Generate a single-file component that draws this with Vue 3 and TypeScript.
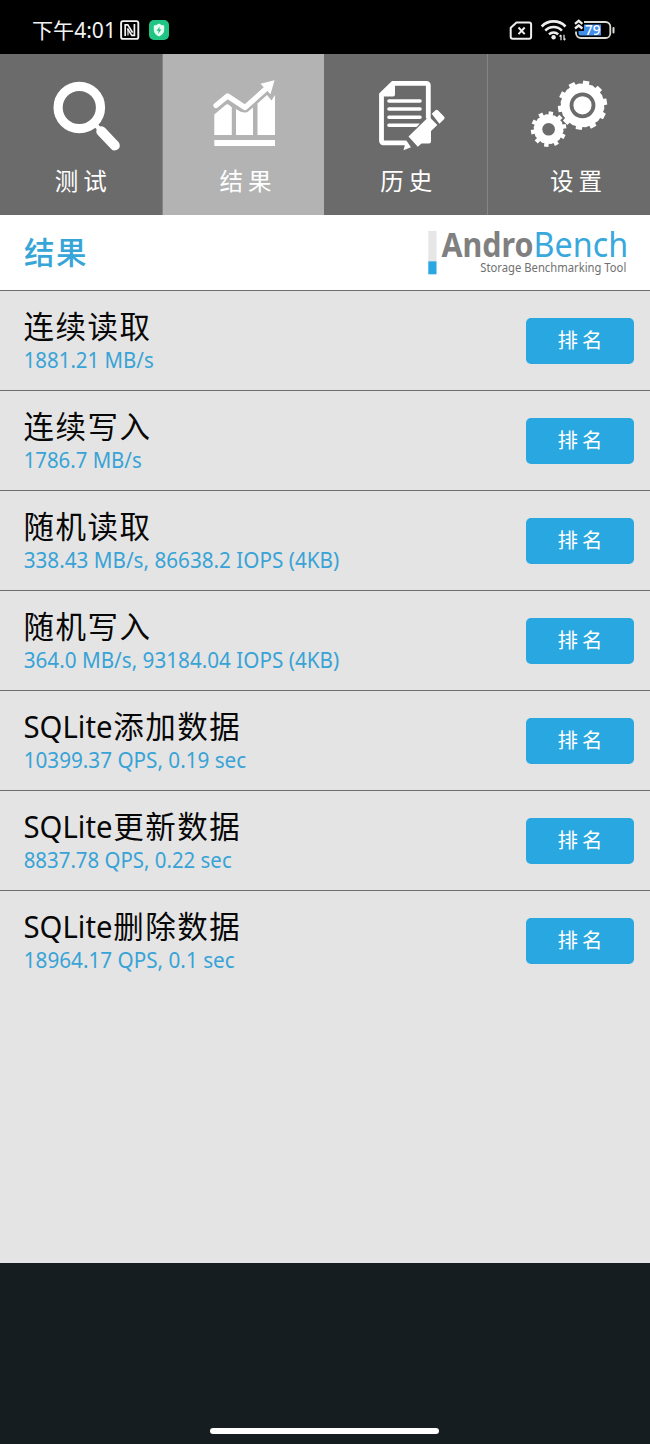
<script setup lang="ts">
interface Result {
  latin: string
  cjk: string
  value: string
  width: number
}

const results: Result[] = [
  { latin: '', cjk: '连续读取', value: '1881.21 MB/s', width: 130 },
  { latin: '', cjk: '连续写入', value: '1786.7 MB/s', width: 118 },
  { latin: '', cjk: '随机读取', value: '338.43 MB/s, 86638.2 IOPS (4KB)', width: 315.5 },
  { latin: '', cjk: '随机写入', value: '364.0 MB/s, 93184.04 IOPS (4KB)', width: 315.5 },
  { latin: 'SQLite', cjk: '添加数据', value: '10399.37 QPS, 0.19 sec', width: 222.5 },
  { latin: 'SQLite', cjk: '更新数据', value: '8837.78 QPS, 0.22 sec', width: 208 },
  { latin: 'SQLite', cjk: '删除数据', value: '18964.17 QPS, 0.1 sec', width: 211 },
]

// Builds a closed gear outline; phase is the clockwise angle of the first tooth from vertical.
function gear(cx: number, cy: number, outer: number, root: number, teeth: number, phase: number): string {
  const step = 360 / teeth
  const points: string[] = []
  for (let i = 0; i < teeth; i++) {
    const mid = phase + i * step
    const corners: [number, number][] = [
      [root, -step * 0.24],
      [outer, -step * 0.2],
      [outer, step * 0.2],
      [root, step * 0.24],
      [root + 0.5, step * 0.5],
    ]
    for (const [r, offset] of corners) {
      const a = ((mid + offset) * Math.PI) / 180
      points.push(`${(cx + r * Math.sin(a)).toFixed(2)} ${(cy - r * Math.cos(a)).toFixed(2)}`)
    }
  }
  return `M${points.join('L')}Z`
}

const bigGear = gear(582.5, 105.3, 24.8, 21.6, 10, 9)
const smallGear = gear(548.6, 129.2, 17.9, 14.6, 10, 8)
</script>

<template>
  <div class="screen">
    <header class="status">
      <svg width="200" height="54" viewBox="0 0 200 54">
        <text class="clock" x="32" y="37.8" textLength="84" lengthAdjust="spacingAndGlyphs">下午4:01</text>
        <rect x="121.1" y="21.1" width="17.2" height="17.8" rx="2" fill="none" stroke="#f2f2f2" stroke-width="1.9" />
        <path d="M125.200 36V24.800h2.600l4.800 7.800M134.400 24v11.400h-2.600l-4.400-7" fill="none" stroke="#f2f2f2" stroke-width="1.700" />
        <path d="M128 29v6.500" stroke="#f2f2f2" stroke-width="1.200" />
        <rect x="149" y="20" width="20" height="20" rx="5" fill="#20c584" />
        <path d="M159 23.600c1.700 1.300 3.400 1.800 5.200 1.900v4.600c0 3.100-2 5-5.200 6.500c-3.200-1.500-5.200-3.400-5.200-6.500v-4.600c1.800-.1 3.500-.6 5.200-1.900z" fill="#e6fff4" />
        <path d="M159.800 26.500l-3.200 4.200h2.100l-.6 3.400l3.300-4.500h-2.100z" fill="#20b87b" />
      </svg>
      <svg width="160" height="54" viewBox="490 0 160 54">
        <path d="M516.500 22.500h12.600a2 2 0 0 1 2 2v12.200a2 2 0 0 1-2 2h-16.400a2 2 0 0 1-2-2v-8.900z" fill="none" stroke="#eee" stroke-width="2" stroke-linejoin="round" />
        <path d="M518.500 27.500l6.200 6.600m0-6.600l-6.200 6.600" stroke="#eee" stroke-width="2" />
        <g fill="none" stroke="#eee">
          <path d="M541.700 26.500a16.500 16.500 0 0 1 23.800 0" stroke-width="2.700" />
          <path d="M545.300 30.600a11.500 11.500 0 0 1 16.600 0" stroke-width="2.600" />
          <path d="M549 34.300a6.500 6.500 0 0 1 9.200 0" stroke-width="2.500" />
        </g>
        <circle cx="553.600" cy="37.200" r="2.200" fill="#eee" />
        <path d="M561 35v5.200M564 40v-5.200M559.500 36.500l1.500-1.600M565.500 38.600l-1.500 1.600" stroke="#ddd" stroke-width="1.300" fill="none" />
        <path d="M584 22h21.500a4.800 4.800 0 0 1 4.800 4.800v6.400a4.800 4.800 0 0 1-4.800 4.800h-24.500a5 5 0 0 1-5-5v-1.500" fill="none" stroke="#dedcd6" stroke-width="1.800" />
        <path d="M584 24.500h17v11h-20.500a2 2 0 0 1-2-2v-2.500h5.500z" fill="#3f8eea" />
        <path d="M575 23.800l3.700-3l3.700 3M575 28.500l3.700-3l3.700 3" fill="none" stroke="#eee" stroke-width="2.300" />
        <path d="M613.500 28v4.400" stroke="#dedcd6" stroke-width="2" stroke-linecap="round" />
        <text class="battery" x="585" y="34.900" textLength="15.500" lengthAdjust="spacingAndGlyphs">79</text>
      </svg>
    </header>

    <nav class="tabs">
      <div class="tab">
        <svg width="162" height="161" viewBox="0 54 162 161">
          <circle cx="79.300" cy="107.500" r="21.200" fill="none" stroke="#fff" stroke-width="9.200" />
          <path d="M95 124.500l3.500 3.500" stroke="#fff" stroke-width="4.500" />
          <path d="M101.300 131.300l13.500 14.200" stroke="#fff" stroke-width="10" stroke-linecap="round" />
          <text class="tab-label" x="54.800" y="190">测试</text>
        </svg>
      </div>
      <div class="tab active">
        <svg width="162" height="161" viewBox="162 54 162 161">
          <rect x="162" y="54" width="1" height="161" fill="#858585" />
          <g fill="#fff">
            <path d="M214.300 135V114.500l11-9.300q2-1.700 4 0l2.500 2V135z" />
            <path d="M236 135V109q7 5 11.500 3l5.500-4.500V135z" />
            <path d="M257.500 135V103.500l9.500-8.400l4.500 5.500l3.500-5.500V135z" />
            <rect x="214.300" y="140" width="60.700" height="6" />
            <path d="M260.500 83.800l14-3.600l-4 14z" />
          </g>
          <path d="M216 105.500l11.500-9.500l17.500 11.500l24-21.500" fill="none" stroke="#fff" stroke-width="5.200" stroke-linecap="round" stroke-linejoin="round" />
          <text class="tab-label" x="219.500" y="190">结果</text>
        </svg>
      </div>
      <div class="tab">
        <svg width="163" height="161" viewBox="324 54 163 161">
          <path d="M406 142.900H383.300a1.800 1.800 0 0 1-1.800-1.800v-46.500L393 83.300h33.500a1.800 1.800 0 0 1 1.800 1.800V120" fill="none" stroke="#fff" stroke-width="4.800" />
          <path d="M379.300 95.500l13-13.500h2.700v12.500a2 2 0 0 1-2 2h-13.700z" fill="#fff" />
          <path d="M389 101h31M389 109h31M389 117.200h31M389 125.200h30" stroke="#fff" stroke-width="3.600" stroke-linecap="round" />
          <path d="M405 139l4-4.500l14-14v-2h7v10l-12 19h-9z" fill="#6b6b6b" />
          <path d="M408.500 136.500L429 116.500l8.300 8.500l-6.300 6v10.500a2 2 0 0 1-2 2h-7.500l-3.700 3.300z" fill="#fff" />
          <path d="M431.700 113.800l3.600-3.300a2 2 0 0 1 2.800 0l5.900 5.900a2 2 0 0 1 0 2.800l-4.600 4.500z" fill="#fff" />
          <path d="M406.200 140.300l4.800 7l-7.500 3z" fill="#fff" />
          <text class="tab-label" x="380.300" y="190">历史</text>
        </svg>
      </div>
      <div class="tab last">
        <svg width="162" height="161" viewBox="488 54 162 161">
          <path :d="bigGear" fill="#fff" />
          <circle cx="582.500" cy="105.300" r="11" fill="none" stroke="#6b6b6b" stroke-width="3.800" />
          <path :d="smallGear" fill="#fff" />
          <circle cx="548.600" cy="129.200" r="6.300" fill="#6b6b6b" />
          <text class="tab-label" x="550" y="190">设置</text>
        </svg>
      </div>
    </nav>

    <section class="title-bar">
      <h1>结果</h1>
      <svg class="logo" width="222" height="75" viewBox="428 215 222 75">
        <rect x="428.300" y="231" width="8.200" height="30.300" fill="#e6e6e6" />
        <rect x="428.300" y="261.300" width="8.200" height="13" fill="#29a7e1" />
        <text class="andro" x="441.500" y="257" textLength="92" lengthAdjust="spacingAndGlyphs">Andro</text>
        <text class="bench" x="533.600" y="257" textLength="94.500" lengthAdjust="spacingAndGlyphs">Bench</text>
        <text class="tagline" x="480.300" y="272.300" textLength="146" lengthAdjust="spacingAndGlyphs">Storage Benchmarking Tool</text>
      </svg>
    </section>

    <main class="list">
      <div v-for="item in results" :key="item.value" class="row">
        <svg width="360" height="99" viewBox="0 1 360 99">
          <text v-if="item.latin" class="name" x="23.500" y="48" textLength="89" lengthAdjust="spacingAndGlyphs">{{ item.latin }}</text>
          <text class="name cjk" :x="item.latin ? 113.300 : 23.600" y="47.800">{{ item.cjk }}</text>
          <text class="value" x="23.700" y="78.400" :textLength="item.width" lengthAdjust="spacingAndGlyphs">{{ item.value }}</text>
        </svg>
        <button class="rank">排名</button>
      </div>
    </main>

    <footer class="bottom"><div class="home"></div></footer>
  </div>
</template>

<style>
body {
  margin: 0;
  background: #151d20;
}
</style>

<style scoped>
.screen {
  width: 650px;
  height: 1444px;
  display: flex;
  flex-direction: column;
  overflow: hidden;
  font-family: "Noto Sans", "Noto Sans CJK SC", sans-serif;
}
svg {
  display: block;
  flex: none;
}
.status {
  height: 54px;
  flex: none;
  background: #000;
  display: flex;
  justify-content: space-between;
}
.clock {
  font-size: 21px;
  fill: #f2f2f2;
}
.battery {
  font-size: 14px;
  font-weight: 500;
  fill: #fff;
}
.tabs {
  height: 161px;
  flex: none;
  display: flex;
  background: #6b6b6b;
}
.tab {
  background: #6b6b6b;
}
.tab.active {
  background: #b3b3b3;
}
.tab.last {
  border-left: 1px solid #858585;
}
.tab-label {
  font-family: "Noto Sans CJK SC", sans-serif;
  font-size: 23.5px;
  letter-spacing: 5px;
  fill: #fff;
}
.title-bar {
  height: 75px;
  flex: none;
  background: #fff;
  display: flex;
  align-items: center;
  justify-content: space-between;
}
h1 {
  margin: 0 0 4px 24px;
  font-family: "Noto Sans CJK SC", sans-serif;
  font-size: 30.5px;
  line-height: 44px;
  font-weight: 500;
  letter-spacing: 1.5px;
  color: #38a5d8;
}
.andro {
  font-size: 34.5px;
  font-weight: 700;
  fill: #808080;
}
.bench {
  font-size: 34.5px;
  fill: #38a8dd;
}
.tagline {
  font-size: 11.7px;
  fill: #707070;
}
.list {
  height: 973px;
  flex: none;
  background: #e4e4e4;
}
.row {
  height: 100px;
  box-sizing: border-box;
  border-top: 1px solid #6e6e6e;
  display: flex;
  align-items: center;
  justify-content: space-between;
  padding-right: 16px;
}
.name {
  font-size: 31px;
  fill: #080808;
}
.name.cjk {
  font-family: "Noto Sans CJK SC", sans-serif;
  font-size: 30.5px;
  letter-spacing: 1.5px;
}
.value {
  font-size: 21.5px;
  fill: #38a3d6;
}
.rank {
  width: 108px;
  height: 46px;
  border: 0;
  border-radius: 5px;
  padding: 0 0 3px 4px;
  background: #29a7e1;
  color: #fff;
  font-family: "Noto Sans CJK SC", sans-serif;
  font-size: 20.5px;
  line-height: 43px;
  letter-spacing: 4px;
}
.bottom {
  flex: 1;
  background: #151d20;
  display: flex;
  align-items: flex-end;
  justify-content: center;
}
.home {
  width: 229px;
  height: 6px;
  margin: 0 1px 10px 0;
  border-radius: 3px;
  background: #fff;
}
</style>
